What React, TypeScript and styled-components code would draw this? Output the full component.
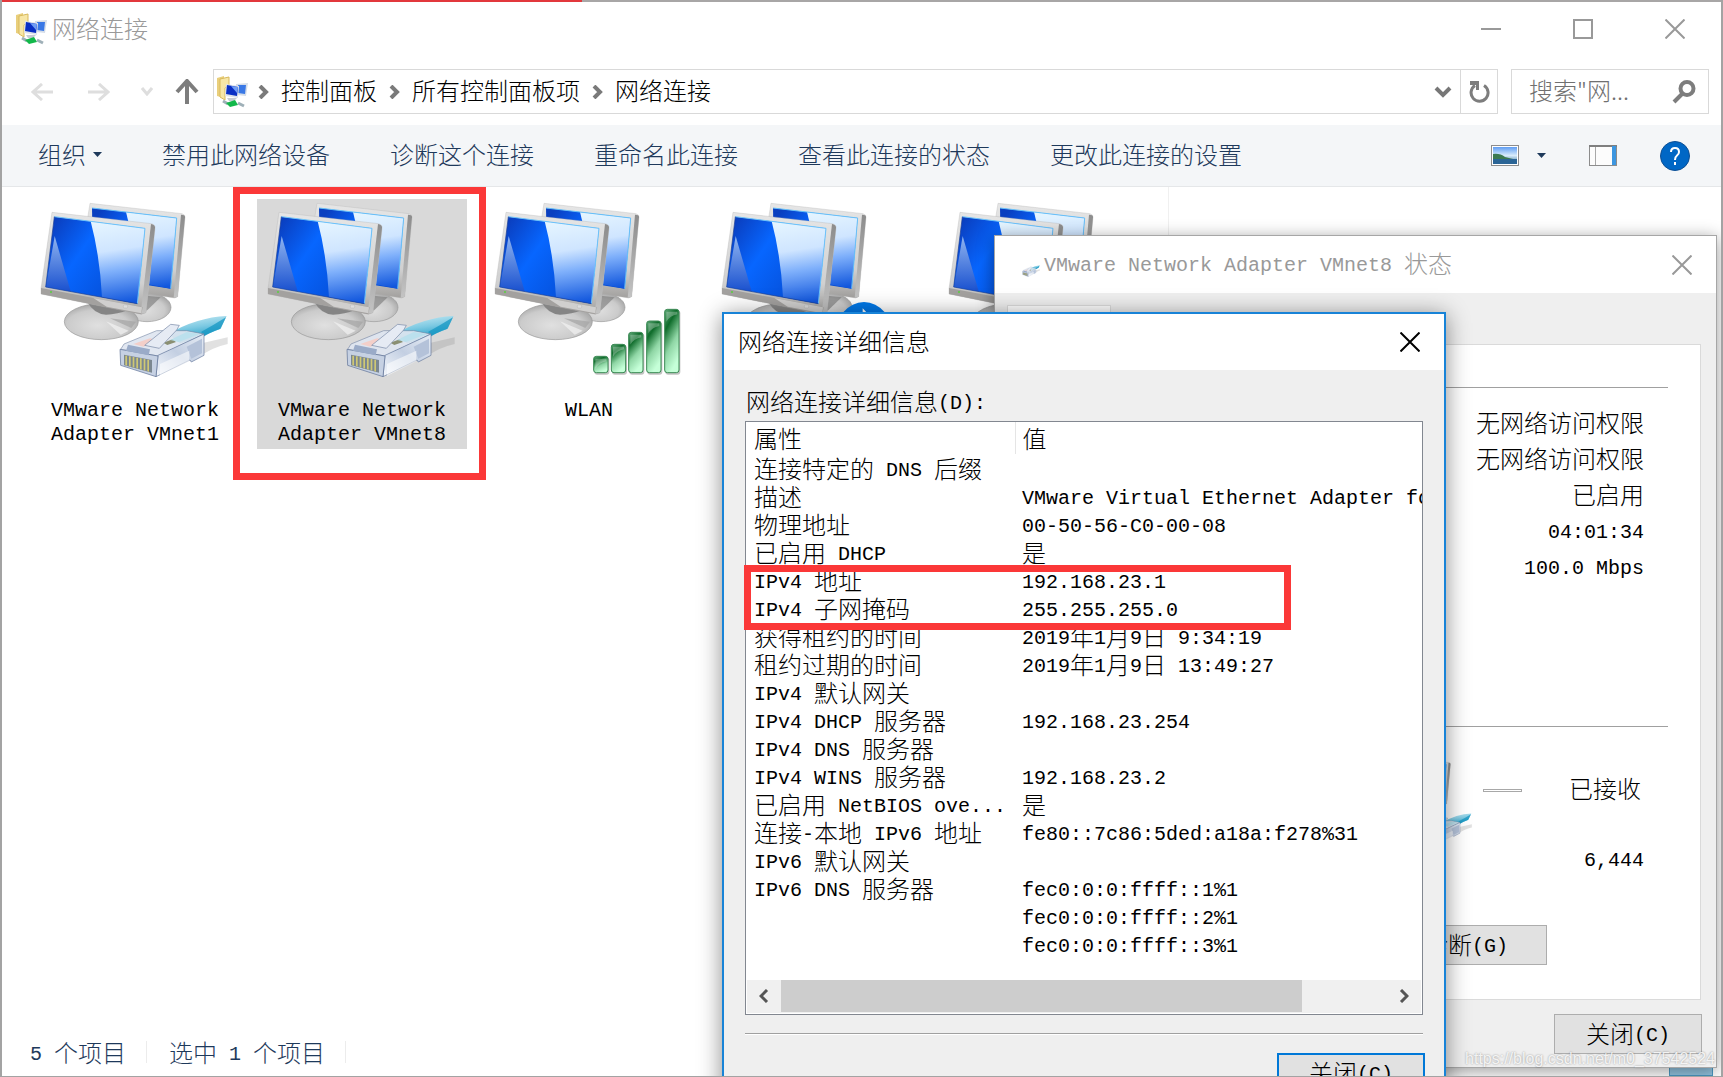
import React from 'react';
import styled, { createGlobalStyle, css } from 'styled-components';

const Global = createGlobalStyle`
  *, *::before, *::after { box-sizing: border-box; }
  html, body, #root { height: 100%; }
  body {
    margin: 0;
    overflow: hidden;
    background: #fff;
    color: #000;
    font: 300 24px/28px "Noto Sans CJK SC", sans-serif;
  }
  button, input { font: inherit; color: inherit; border: 0; padding: 0; background: none; border-radius: 0; }
  svg { display: block; flex: none; }
`;

const Latin = styled.span`
  font-family: "Liberation Mono", monospace;
  font-size: 20px;
  font-weight: 400;
  line-height: 0;
  vertical-align: 2px;
  white-space: pre;
`;

/* Half-width runs take a 12px cell next to the 24px full-width cell. */
function T({ children }: { children: string }) {
  return (
    <>
      {children.split(/([\x20-\x7e]+)/).map((part, i) => (i % 2 ? <Latin key={i}>{part}</Latin> : part))}
    </>
  );
}

const red = '#fb3838';

/* ---------- drawings ---------- */

const HiddenSvg = styled.svg`
  position: absolute;
`;

const Defs = () => (
  <HiddenSvg width="0" height="0" aria-hidden="true">
    <defs>
      <linearGradient id="deep" x1="0" y1="0.2" x2="1" y2="0.8">
        <stop offset="0" stopColor="#0a3fc0" />
        <stop offset="0.35" stopColor="#0766ff" />
        <stop offset="1" stopColor="#0546c8" />
      </linearGradient>
      <linearGradient id="gloss" x1="0.4" y1="0" x2="0.5" y2="1">
        <stop offset="0" stopColor="#e4f4ff" />
        <stop offset="0.35" stopColor="#cfe5ff" />
        <stop offset="0.6" stopColor="#7fb0fb" />
        <stop offset="1" stopColor="#1257dd" />
      </linearGradient>
      <linearGradient id="streak" x1="0" y1="0" x2="0" y2="1">
        <stop offset="0" stopColor="#8fb4f0" />
        <stop offset="1" stopColor="#1a51cf" />
      </linearGradient>
      <linearGradient id="bezel" x1="0" y1="0" x2="0" y2="1">
        <stop offset="0" stopColor="#e6e6e6" />
        <stop offset="0.7" stopColor="#d0d0d0" />
        <stop offset="1" stopColor="#a2a09e" />
      </linearGradient>
      <linearGradient id="edge" x1="0" y1="0" x2="0" y2="1">
        <stop offset="0" stopColor="#8c8c8c" />
        <stop offset="1" stopColor="#c4c4c4" />
      </linearGradient>
      <radialGradient id="base" cx="0.45" cy="0.6" r="0.6">
        <stop offset="0" stopColor="#e0e0e0" />
        <stop offset="0.7" stopColor="#cbcbcb" />
        <stop offset="1" stopColor="#a6a6a6" />
      </radialGradient>
      <linearGradient id="cable" x1="0" y1="0" x2="0.3" y2="1">
        <stop offset="0" stopColor="#d5f0f7" />
        <stop offset="0.5" stopColor="#7cc9e2" />
        <stop offset="1" stopColor="#0d93c0" />
      </linearGradient>
      <linearGradient id="plug" x1="0" y1="1" x2="1" y2="0">
        <stop offset="0" stopColor="#f4f7fc" />
        <stop offset="0.5" stopColor="#c3cfe2" />
        <stop offset="1" stopColor="#e6ecf5" />
      </linearGradient>
      <linearGradient id="bar" x1="0" y1="0" x2="0.4" y2="1">
        <stop offset="0" stopColor="#5fa878" />
        <stop offset="0.3" stopColor="#0f6c2b" />
        <stop offset="0.65" stopColor="#8fd6a5" />
        <stop offset="1" stopColor="#c5ffd8" />
      </linearGradient>
      <linearGradient id="sky" x1="0" y1="0" x2="0" y2="1">
        <stop offset="0" stopColor="#5f9df3" />
        <stop offset="0.5" stopColor="#d8ecfb" />
        <stop offset="1" stopColor="#2f6f9c" />
      </linearGradient>
    </defs>
  </HiddenSvg>
);

const Plug = () => (
  <g>
    <path d="M560 500 L683 472 V492 Q640 500 590 535 Z" fill="#888" opacity="0.25" />
    <path d="M505 462 Q590 412 680 408 L660 447 Q620 462 600 474 L540 490 Z" fill="url(#cable)" />
    <path d="M604 455 Q640 436 678 412 L662 446 Q630 456 608 472 Z" fill="#1597c3" opacity="0.75" />
    <path d="M372 492 L470 452 L560 452 L612 462 L474 528 L362 508 Z" fill="#dfe6f0" stroke="#7587a5" strokeWidth="2" opacity="0.92" />
    <path d="M400 492 L450 475 L480 482 L430 500 Z" fill="#f3cfc9" />
    <path d="M490 488 L518 478 L528 486 L502 495 Z" fill="#8a8f72" />
    <path d="M510 480 L560 456 L600 462 L536 486 Z" fill="#b5e0ec" opacity="0.8" />
    <path d="M468 590 L570 540 L574 546 L612 526 V462 L474 526 Z" fill="url(#plug)" stroke="#63779b" strokeWidth="2" />
    <path d="M560 500 L606 476 V520 L574 536 Z" fill="#b4c2d9" />
    <path d="M360 508 L474 528 L468 590 L362 556 Z" fill="#c6d1e3" stroke="#596d92" strokeWidth="2" />
    <path d="M372 524 L456 540 V578 L372 556 Z" fill="#7b8790" />
    {[376, 387, 398, 409, 420, 431, 442].map((x, i) => (
      <path key={x} d={`M${x} ${527 + i * 2} h5 v${30 + i} l-5 -2 z`} fill="#cfc874" />
    ))}
    <path d="M384 494 L450 508 L446 526 L378 512 Z" fill="#9aabc8" />
    <path d="M434 496 L512 433 L538 436 L530 450 L478 505 Z" fill="#e6ebf4" stroke="#7587a5" strokeWidth="2" />
    <path d="M480 588 L568 544 V512 L480 552 Z" fill="#fff" opacity="0.55" />
  </g>
);

const Monitors = () => (
  <g>
    <ellipse cx="441" cy="382" rx="72" ry="43" fill="url(#base)" stroke="#9a9a9a" strokeWidth="2" />
    <path d="M420 345 L482 352 L440 392 Z" fill="#777" opacity="0.6" />
    <path d="M270 70 L546 101 Q556 104 555 112 L533 350 L524 354 L400 335 L262 120 Z" fill="url(#bezel)" stroke="#b4b4b4" strokeWidth="1" />
    <path d="M543 104 Q556 104 555 112 L533 350 L521 354 Z" fill="url(#edge)" />
    <path d="M276 84 L530 114 L512 326 L280 290 Z" fill="url(#deep)" />
    <path d="M378 96 L530 114 L521 220 L512 326 L430 310 Z" fill="url(#gloss)" />
    <path d="M276 84 L530 114 L512 326" fill="none" stroke="#67c0f8" strokeWidth="3" />
    <ellipse cx="304" cy="425" rx="111" ry="54" fill="url(#base)" stroke="#979797" strokeWidth="2" />
    <path d="M262 366 L392 388 Q350 404 318 404 Q282 402 262 366 Z" fill="#858585" />
    <path d="M318 424 L386 452 L362 464 Z" fill="#f2f2f2" opacity="0.7" />
    <path d="M330 415 L408 425 L394 444 Z" fill="#a4a4a4" opacity="0.7" />
    <path d="M156 97 L454 131 Q466 134 465 144 L438 398 L424 403 L123 342 V326 Z" fill="url(#bezel)" stroke="#b0b0b0" strokeWidth="1" />
    <path d="M453 132 Q466 134 465 144 L438 398 L422 402 Z" fill="url(#edge)" />
    <path d="M123 324 L428 382 L424 403 L123 342 Z" fill="#a3a19f" />
    <path d="M280 354 L426 382 L424 400 L320 380 Z" fill="#d0cfce" />
    <path d="M163 110 L435 145 L412 371 L137 321 Z" fill="url(#deep)" />
    <path d="M272 124 L435 145 L412 371 L306 352 Q300 230 272 124 Z" fill="url(#gloss)" />
    <path d="M164 168 L212 334 L138 320 Z" fill="url(#streak)" />
    <path d="M163 110 L435 145 L412 371" fill="none" stroke="#6cc3fa" strokeWidth="3" />
    <path d="M163 110 L137 321 L412 371" fill="none" stroke="#1c3f94" strokeWidth="2" />
    <circle cx="153" cy="336" r="3" fill="#57d23c" />
    <rect x="370" y="375" width="13" height="9" rx="3" fill="#ddd" stroke="#aaa" />
  </g>
);

type Badge = 'plug' | 'bars' | 'bluetooth';

function NetIcon({ badge, width = 210 }: { badge: Badge; width?: number }) {
  return (
    <svg width={width} height={(width * 6) / 7} viewBox="90 57 630 540" aria-hidden="true">
      <Monitors />
      {badge === 'plug' && <Plug />}
      {badge === 'bars' &&
        [[418, 528], [471, 492], [523, 456], [577, 422], [631, 387]].map(([x, y]) => (
          <g key={x}>
            <rect x={x + 3} y={y + 4} width="45" height={580 - y} rx="9" fill="#999" opacity="0.6" />
            <rect x={x + 1} y={y + 1} width="43" height={577 - y} rx="8" fill="url(#bar)" stroke="#3c8a55" strokeWidth="3" />
            <path d={`M${x + 6} ${y + 8} h33 v8 q-22 4 -33 22 z`} fill="#fff" opacity="0.28" />
          </g>
        ))}
      {badge === 'bluetooth' && (
        <g>
          <ellipse cx="549" cy="470" rx="88" ry="104" fill="#0078e8" />
          <path d="M515 436 L580 504 L548 536 V392 L580 426 L515 500" fill="none" stroke="#fff" strokeWidth="6" />
        </g>
      )}
    </svg>
  );
}

const FolderIcon = () => (
  <svg width="32" height="32" viewBox="0 0 32 32" aria-hidden="true">
    <path d="M1 2 L8 0 V22 L1 20 Z" fill="#e9cf7c" />
    <path d="M4 3 L13 1 V9 L9 12 V24 L4 21 Z" fill="#f7e6a6" stroke="#d8b95c" />
    <path d="M20 8 L32 7 L30 20 L21 19 Z" fill="#d5dde8" />
    <path d="M22 9 L30 9 L29 18 L22 17 Z" fill="#3a78e6" />
    <path d="M10 8 L23 10 L22 22 L9 20 Z" fill="#dfe3ea" />
    <path d="M11 9 L22 11 L21 20 L10 18 Z" fill="#0a2fc4" />
    <path d="M15 10 L22 11 L21 17 Z" fill="#6f9df5" />
    <path d="M11 22 L21 22 L18 25 H13 Z" fill="#c7ccd4" />
    <path d="M7 25 L12 28 M22 27 L28 30" stroke="#9fb0b8" strokeWidth="3" />
    <path d="M10 27 L19 24 L22 29 L14 31 Z" fill="#12b84a" />
  </svg>
);

const Stroke = ({ d, w, h, color, width = 2 }: { d: string; w: number; h: number; color: string; width?: number }) => (
  <svg width={w} height={h} viewBox={`0 0 ${w} ${h}`} aria-hidden="true">
    <path d={d} fill="none" stroke={color} strokeWidth={width} />
  </svg>
);

const Cross = ({ color }: { color: string }) => <Stroke d="M0.5 0.5 L19.5 19.5 M19.5 0.5 L0.5 19.5" w={20} h={20} color={color} />;
const Crumb = () => <Stroke d="M2 1 L8 7 L2 13" w={11} h={14} color="#7a7a7a" width={4} />;
const Caret = () => (
  <svg width="9" height="5" viewBox="0 0 9 5" aria-hidden="true">
    <path d="M0 0 H9 L4.5 5 Z" fill="#1e395b" />
  </svg>
);

/* ---------- explorer window ---------- */

const Explorer = styled.main`
  position: relative;
  display: flex;
  flex-direction: column;
  height: 100vh;
  overflow: hidden;
  border: 2px solid #a3a3a3;
  border-top: 0;
  border-bottom-width: 1px;
`;

const TopEdge = styled.div`
  flex: none;
  height: 2px;
  margin: 0 -2px;
  background: linear-gradient(90deg, #e2383c 582px, #a8a6a6 582px);
`;

const TitleBar = styled.header`
  display: flex;
  align-items: center;
  flex: none;
  height: 54px;
  padding-left: 13px;
  color: #999;
`;

const TitleText = styled.h1`
  flex: 1;
  margin: 0 0 0 5px;
  padding-bottom: 2px;
  font-size: 24px;
  font-weight: inherit;
`;

const IconButton = styled.button<{ $w: number }>`
  display: flex;
  align-items: center;
  justify-content: center;
  flex: none;
  width: ${p => p.$w}px;
  height: 40px;
`;

const UpButton = styled(IconButton)`
  margin-left: 6px;
`;

const NavRow = styled.nav`
  display: flex;
  align-items: center;
  flex: none;
  height: 45px;
  margin: 13px 12px 11px 18px;
`;

const Address = styled.div`
  display: flex;
  align-items: center;
  flex: 1;
  height: 45px;
  margin-left: 6px;
  padding-left: 2px;
  border: 1px solid #d9d9d9;
`;

const Crumbs = styled.ol`
  display: flex;
  align-items: center;
  flex: 1;
  gap: 12px;
  margin: 0 0 0 10px;
  padding: 0;
  list-style: none;
`;

const CrumbItem = styled.li`
  display: flex;
  align-items: center;
  gap: 12px;

  span { padding-bottom: 4px; }
`;

const Refresh = styled(IconButton)`
  height: 43px;
  border-left: 1px solid #d9d9d9;
`;

const SearchBox = styled.label`
  display: flex;
  align-items: center;
  width: 198px;
  height: 45px;
  margin-left: 13px;
  padding: 0 12px 0 17px;
  border: 1px solid #d9d9d9;

  input {
    flex: 1;
    min-width: 0;
    height: 40px;
    padding-bottom: 4px;
    outline: 0;
    color: #707070;
  }
  input::placeholder { color: #707070; opacity: 1; }
`;

const Toolbar = styled.div`
  display: flex;
  align-items: center;
  flex: none;
  height: 62px;
  padding: 0 14px 0 36px;
  border-bottom: 1px solid #e5e7e9;
  background: #f4f6f8;
  color: #1e395b;
`;

const Commands = styled.div`
  display: flex;
  flex: 1;
  gap: 60px;
  padding-bottom: 3px;
`;

const Command = styled.button`
  display: flex;
  align-items: center;
  gap: 7px;
  white-space: nowrap;
`;

const Content = styled.section`
  display: grid;
  grid-template-columns: minmax(0, 1167px) 1fr;
  flex: 1;
  min-height: 0;
`;

const Items = styled.ul`
  display: flex;
  align-items: flex-start;
  gap: 17px;
  margin: 0;
  padding: 12px 0 0 28px;
  border-right: 1px solid #f0f0f0;
  list-style: none;
`;

const Item = styled.li<{ $selected?: boolean }>`
  position: relative;
  flex: none;
  width: 210px;
  height: 250px;
  text-align: center;
  ${p => p.$selected && css`background: #d9d9d9;`}
`;

const ItemName = styled.div`
  margin-top: 17px;
  line-height: 24px;
`;

const Mark = styled.div`
  position: absolute;
  border: 7px solid ${red};
  pointer-events: none;
`;

const ItemMark = styled(Mark)`
  inset: -12px -19px -31px -24px;
`;

const StatusBar = styled.footer`
  display: flex;
  align-items: center;
  flex: none;
  height: 48px;
  padding-left: 28px;
  color: #1e395b;
`;

const StatusPart = styled.span`
  margin-right: 22px;
  padding-right: 20px;
  border-right: 1px solid #ececec;
  line-height: 22px;
`;

const TaskPiece = styled.div`
  position: absolute;
  right: 8px;
  bottom: 0;
  width: 44px;
  height: 10px;
  border: 1px solid #4a9ac4;
  background: #93c4e0;
`;

/* ---------- dialogs ---------- */

const Dialog = styled.section`
  position: absolute;
  display: flex;
  flex-direction: column;
  background: #efefef;
`;

const StatusDialog = styled(Dialog)`
  top: 235px;
  right: 4px;
  bottom: 8px;
  left: 992px;
  border: 1px solid #a6a6a6;
  box-shadow: 0 3px 16px rgba(0, 0, 0, 0.4);
`;

const DetailsDialog = styled(Dialog)`
  top: 312px;
  left: 720px;
  width: 724px;
  height: 800px;
  border: 2px solid #1883d7;
  box-shadow: 0 3px 22px rgba(0, 0, 0, 0.45);
`;

const DialogTitle = styled.header<{ $muted?: boolean }>`
  display: flex;
  align-items: center;
  flex: none;
  height: ${p => (p.$muted ? 57 : 56)}px;
  padding: 0 14px;
  background: #fff;
  color: ${p => (p.$muted ? '#999' : '#000')};
`;

const DialogHeading = styled.h2`
  flex: 1;
  margin: 0;
  padding-bottom: 3px;
  font-size: 24px;
  font-weight: inherit;
  white-space: nowrap;
`;

const DialogIcon = styled.div`
  margin: 13px 4px 0 13px;
`;

const Tab = styled.div`
  flex: none;
  width: 104px;
  height: 39px;
  margin: 12px 0 0 12px;
  border: 1px solid #dcdcdc;
  border-bottom: 0;
  background: #fff;
`;

const Panel = styled.div`
  display: flex;
  flex-direction: column;
  flex: none;
  height: 656px;
  margin: 0 15px 0 12px;
  padding: 42px 32px 0 0;
  border: 1px solid #dadada;
  background: #fff;
`;

const Facts = styled.ul`
  height: 339px;
  margin: 0;
  padding: 16px 24px 0 0;
  border-top: 1px solid #a0a0a0;
  list-style: none;
  text-align: right;
  line-height: 36px;
`;

const Activity = styled.div`
  display: grid;
  grid-template-columns: 1fr 39px 117px;
  align-items: start;
  column-gap: 5px;
  height: 199px;
  padding: 28px 24px 0 0;
  border-top: 1px solid #a0a0a0;
`;

const ActivityIcon = styled.div`
  justify-self: end;
`;

const Dash = styled.div`
  height: 3px;
  margin-top: 34px;
  border: 1px solid #a8a8a8;
`;

const Received = styled.div`
  display: flex;
  flex-direction: column;
  align-items: flex-end;
  gap: 42px;
  padding-top: 19px;
`;

const ReceivedLabel = styled.span`
  margin-right: 3px;
`;

const PushButton = styled.button<{ $default?: boolean; $w?: number }>`
  flex: none;
  width: ${p => p.$w ?? 148}px;
  height: 40px;
  padding-bottom: 3px;
  border: ${p => (p.$default ? '2px solid #0078d7' : '1px solid #adadad')};
  background: #e1e1e1;
`;

const DiagnoseRow = styled.div`
  display: flex;
  justify-content: flex-end;
  padding-right: 121px;
`;

const CloseRow = styled.div`
  display: flex;
  justify-content: flex-end;
  padding: 14px 14px 0 0;
`;

const DetailsBody = styled.div`
  display: flex;
  flex-direction: column;
  padding: 16px 21px 0;
`;

const ListLabel = styled.div`
  margin-left: 1px;
  line-height: 30px;
`;

const ListBox = styled.div`
  position: relative;
  display: flex;
  flex-direction: column;
  height: 594px;
  margin-top: 5px;
  border: 1px solid #828790;
  background: #fff;
`;

const TableClip = styled.div`
  flex: 1;
  overflow: hidden;
`;

const Table = styled.table`
  width: 100%;
  table-layout: fixed;
  border-collapse: collapse;

  th, td {
    height: 28px;
    padding: 0 0 0 7px;
    overflow: hidden;
    font-weight: inherit;
    text-align: left;
    white-space: nowrap;
    line-height: 28px;
  }
  th { height: 32px; }
  th:first-child { width: 269px; border-right: 1px solid #e5e5e5; }
  th:first-child, td:first-child { padding-left: 8px; }
`;

const RowMark = styled(Mark)`
  top: 143px;
  left: -2px;
  width: 547px;
  height: 65px;
`;

const ScrollBar = styled.div`
  display: flex;
  flex: none;
  height: 33px;
  margin: 0 1px 1px;
  background: #f0f0f0;
`;

const ScrollTrack = styled.div`
  flex: 1;
`;

const ScrollThumb = styled.div`
  width: 86%;
  height: 32px;
  background: #cdcdcd;
`;

const ScrollButton = styled(IconButton)`
  height: 32px;
`;

const Rule = styled.hr`
  width: 100%;
  margin: 18px 0;
  border: 0;
  border-top: 1px solid #a0a0a0;
  border-bottom: 1px solid #fff;
`;

const DefaultRow = styled.div`
  display: flex;
  justify-content: flex-end;
  margin-right: -2px;
`;

const Watermark = styled.div`
  position: absolute;
  right: 6px;
  bottom: 5px;
  color: rgba(255, 255, 255, 0.85);
  font: 16px/24px "Liberation Sans", Arial, sans-serif;
  text-shadow: 0 0 2px rgba(0, 0, 0, 0.4);
`;

const items: { name: string[]; badge: Badge; selected?: boolean }[] = [
  { name: ['VMware Network', 'Adapter VMnet1'], badge: 'plug' },
  { name: ['VMware Network', 'Adapter VMnet8'], badge: 'plug', selected: true },
  { name: ['WLAN'], badge: 'bars' },
  { name: [], badge: 'bluetooth' },
  { name: [], badge: 'plug' },
];

const crumbs = ['控制面板', '所有控制面板项', '网络连接'];

const details: [string, string][] = [
  ['连接特定的 DNS 后缀', ''],
  ['描述', 'VMware Virtual Ethernet Adapter for VMnet8'],
  ['物理地址', '00-50-56-C0-00-08'],
  ['已启用 DHCP', '是'],
  ['IPv4 地址', '192.168.23.1'],
  ['IPv4 子网掩码', '255.255.255.0'],
  ['获得租约的时间', '2019年1月9日 9:34:19'],
  ['租约过期的时间', '2019年1月9日 13:49:27'],
  ['IPv4 默认网关', ''],
  ['IPv4 DHCP 服务器', '192.168.23.254'],
  ['IPv4 DNS 服务器', ''],
  ['IPv4 WINS 服务器', '192.168.23.2'],
  ['已启用 NetBIOS ove...', '是'],
  ['连接-本地 IPv6 地址', 'fe80::7c86:5ded:a18a:f278%31'],
  ['IPv6 默认网关', ''],
  ['IPv6 DNS 服务器', 'fec0:0:0:ffff::1%1'],
  ['', 'fec0:0:0:ffff::2%1'],
  ['', 'fec0:0:0:ffff::3%1'],
];

export default function App() {
  return (
    <>
      <Global />
      <Defs />
      <Explorer>
        <TopEdge />
        <TitleBar>
          <FolderIcon />
          <TitleText>网络连接</TitleText>
          <IconButton $w={92} aria-label="最小化"><Stroke d="M0 1 H20" w={20} h={2} color="#999" /></IconButton>
          <IconButton $w={92} aria-label="最大化"><Stroke d="M1 1 H19 V19 H1 Z" w={20} h={20} color="#999" /></IconButton>
          <IconButton $w={92} aria-label="关闭"><Cross color="#999" /></IconButton>
        </TitleBar>

        <NavRow>
          <IconButton $w={44} aria-label="后退"><Stroke d="M22 9 H2 M11 1 L2 9 L11 17" w={22} h={18} color="#dedede" width={3} /></IconButton>
          <IconButton $w={70} aria-label="前进"><Stroke d="M0 9 H20 M11 1 L20 9 L11 17" w={22} h={18} color="#dedede" width={3} /></IconButton>
          <IconButton $w={26} aria-label="最近位置"><Stroke d="M1 1 L6 7 L11 1" w={12} h={9} color="#dedede" width={3} /></IconButton>
          <UpButton $w={41} aria-label="上移"><Stroke d="M12 25 V3 M2 13 L12 2 L22 13" w={24} h={25} color="#7d7d7d" width={4} /></UpButton>
          <Address>
            <FolderIcon />
            <Crumbs>
              {crumbs.map(name => <CrumbItem key={name}><Crumb /><span>{name}</span></CrumbItem>)}
            </Crumbs>
            <IconButton $w={34} aria-label="历史记录"><Stroke d="M2 2 L9 9 L16 2" w={18} h={12} color="#777" width={4} /></IconButton>
            <Refresh $w={37} aria-label="刷新">
              <svg width="22" height="22" viewBox="0 0 22 22" aria-hidden="true">
                <path d="M16 4.5 A8.500 8.500 0 1 1 7 4.600" fill="none" stroke="#7d7d7d" strokeWidth="3" />
                <path d="M2 0 H11 V9 H8 V4 H2 Z" fill="#7d7d7d" />
              </svg>
            </Refresh>
          </Address>
          <SearchBox>
            <input aria-label="搜索" placeholder={'搜索"网...'} />
            <svg width="24" height="24" viewBox="0 0 24 24" aria-hidden="true">
              <circle cx="15" cy="8.5" r="6.5" fill="none" stroke="#7d7d7d" strokeWidth="4" />
              <path d="M10.500 13.500 L2 22" stroke="#7d7d7d" strokeWidth="4" />
            </svg>
          </SearchBox>
        </NavRow>

        <Toolbar>
          <Commands>
            <Command>组织 <Caret /></Command>
            <Command>禁用此网络设备</Command>
            <Command>诊断这个连接</Command>
            <Command>重命名此连接</Command>
            <Command>查看此连接的状态</Command>
            <Command>更改此连接的设置</Command>
          </Commands>
          <IconButton $w={28} aria-label="更改视图">
            <svg width="28" height="21" viewBox="0 0 28 21" aria-hidden="true">
              <rect x="0.5" y="0.5" width="27" height="20" fill="#fff" stroke="#8c8c8c" />
              <rect x="2" y="2" width="24" height="17" fill="url(#sky)" />
              <path d="M2 9 Q9 8 14 12 L22 14 H2 Z" fill="#3c7a50" />
              <path d="M2 14 H26 V19 H2 Z" fill="#2b6596" />
            </svg>
          </IconButton>
          <IconButton $w={44} aria-label="更多选项"><Caret /></IconButton>
          <IconButton $w={80} aria-label="预览窗格">
            <svg width="28" height="21" viewBox="0 0 28 21" aria-hidden="true">
              <rect x="0.5" y="0.5" width="27" height="20" fill="#fcfcfc" stroke="#8c8c8c" />
              <path d="M0 1 H28" stroke="#7f7f7f" strokeWidth="2" />
              <path d="M6.500 2 V20" stroke="#a8a8a8" />
              <rect x="23" y="1" width="4" height="19" fill="#3c96e0" />
            </svg>
          </IconButton>
          <IconButton $w={64} aria-label="帮助">
            <svg width="30" height="30" viewBox="0 0 30 30" aria-hidden="true">
              <circle cx="15" cy="15" r="14.500" fill="#0067c5" stroke="#0d4f94" />
              <path d="M11 11 Q11 7 15 7 Q19 7 19 11 Q19 13 17 14.500 Q15 16 15 19" fill="none" stroke="#fff" strokeWidth="2" />
              <rect x="14" y="21" width="2" height="3" fill="#fff" />
            </svg>
          </IconButton>
        </Toolbar>

        <Content>
          <Items>
            {items.map((item, i) => (
              <Item key={i} $selected={item.selected}>
                <NetIcon badge={item.badge} />
                <ItemName>
                  {item.name.map(line => <div key={line}><T>{line}</T></div>)}
                </ItemName>
                {item.selected && <ItemMark />}
              </Item>
            ))}
          </Items>
        </Content>

        <StatusBar>
          <StatusPart><T>5 个项目</T></StatusPart>
          <StatusPart><T>选中 1 个项目</T></StatusPart>
        </StatusBar>
        <TaskPiece />

        <StatusDialog>
          <DialogTitle $muted>
            <DialogIcon>
              <svg width="18" height="12" viewBox="355 405 330 190" preserveAspectRatio="none" aria-hidden="true"><Plug /></svg>
            </DialogIcon>
            <DialogHeading><T>VMware Network Adapter VMnet8 状态</T></DialogHeading>
            <IconButton $w={40} aria-label="关闭状态"><Cross color="#999" /></IconButton>
          </DialogTitle>
          <Tab />
          <Panel>
            <Facts>
              <li>无网络访问权限</li>
              <li>无网络访问权限</li>
              <li>已启用</li>
              <li><T>04:01:34</T></li>
              <li><T>100.0 Mbps</T></li>
            </Facts>
            <Activity>
              <ActivityIcon><NetIcon badge="plug" width={105} /></ActivityIcon>
              <Dash />
              <Received>
                <ReceivedLabel>已接收</ReceivedLabel>
                <span><T>6,444</T></span>
              </Received>
            </Activity>
            <DiagnoseRow><PushButton $w={162}><T>诊断(G)</T></PushButton></DiagnoseRow>
          </Panel>
          <CloseRow><PushButton><T>关闭(C)</T></PushButton></CloseRow>
        </StatusDialog>

        <DetailsDialog>
          <DialogTitle>
            <DialogHeading>网络连接详细信息</DialogHeading>
            <IconButton $w={40} aria-label="关闭详细信息"><Cross color="#000" /></IconButton>
          </DialogTitle>
          <DetailsBody>
            <ListLabel id="details-label"><T>网络连接详细信息(D):</T></ListLabel>
            <ListBox>
              <TableClip>
                <Table aria-labelledby="details-label">
                  <thead>
                    <tr><th>属性</th><th>值</th></tr>
                  </thead>
                  <tbody>
                    {details.map(([name, value], i) => (
                      <tr key={i}><td><T>{name}</T></td><td><T>{value}</T></td></tr>
                    ))}
                  </tbody>
                </Table>
              </TableClip>
              <ScrollBar>
                <ScrollButton $w={34} aria-label="向左滚动"><Stroke d="M8 1 L2 7 L8 13" w={10} h={14} color="#555" width={3} /></ScrollButton>
                <ScrollTrack><ScrollThumb /></ScrollTrack>
                <ScrollButton $w={34} aria-label="向右滚动"><Stroke d="M2 1 L8 7 L2 13" w={10} h={14} color="#555" width={3} /></ScrollButton>
              </ScrollBar>
              <RowMark />
            </ListBox>
            <Rule />
            <DefaultRow><PushButton $default><T>关闭(C)</T></PushButton></DefaultRow>
          </DetailsBody>
        </DetailsDialog>
        <Watermark>https://blog.csdn.net/m0_37542524</Watermark>
      </Explorer>
    </>
  );
}
